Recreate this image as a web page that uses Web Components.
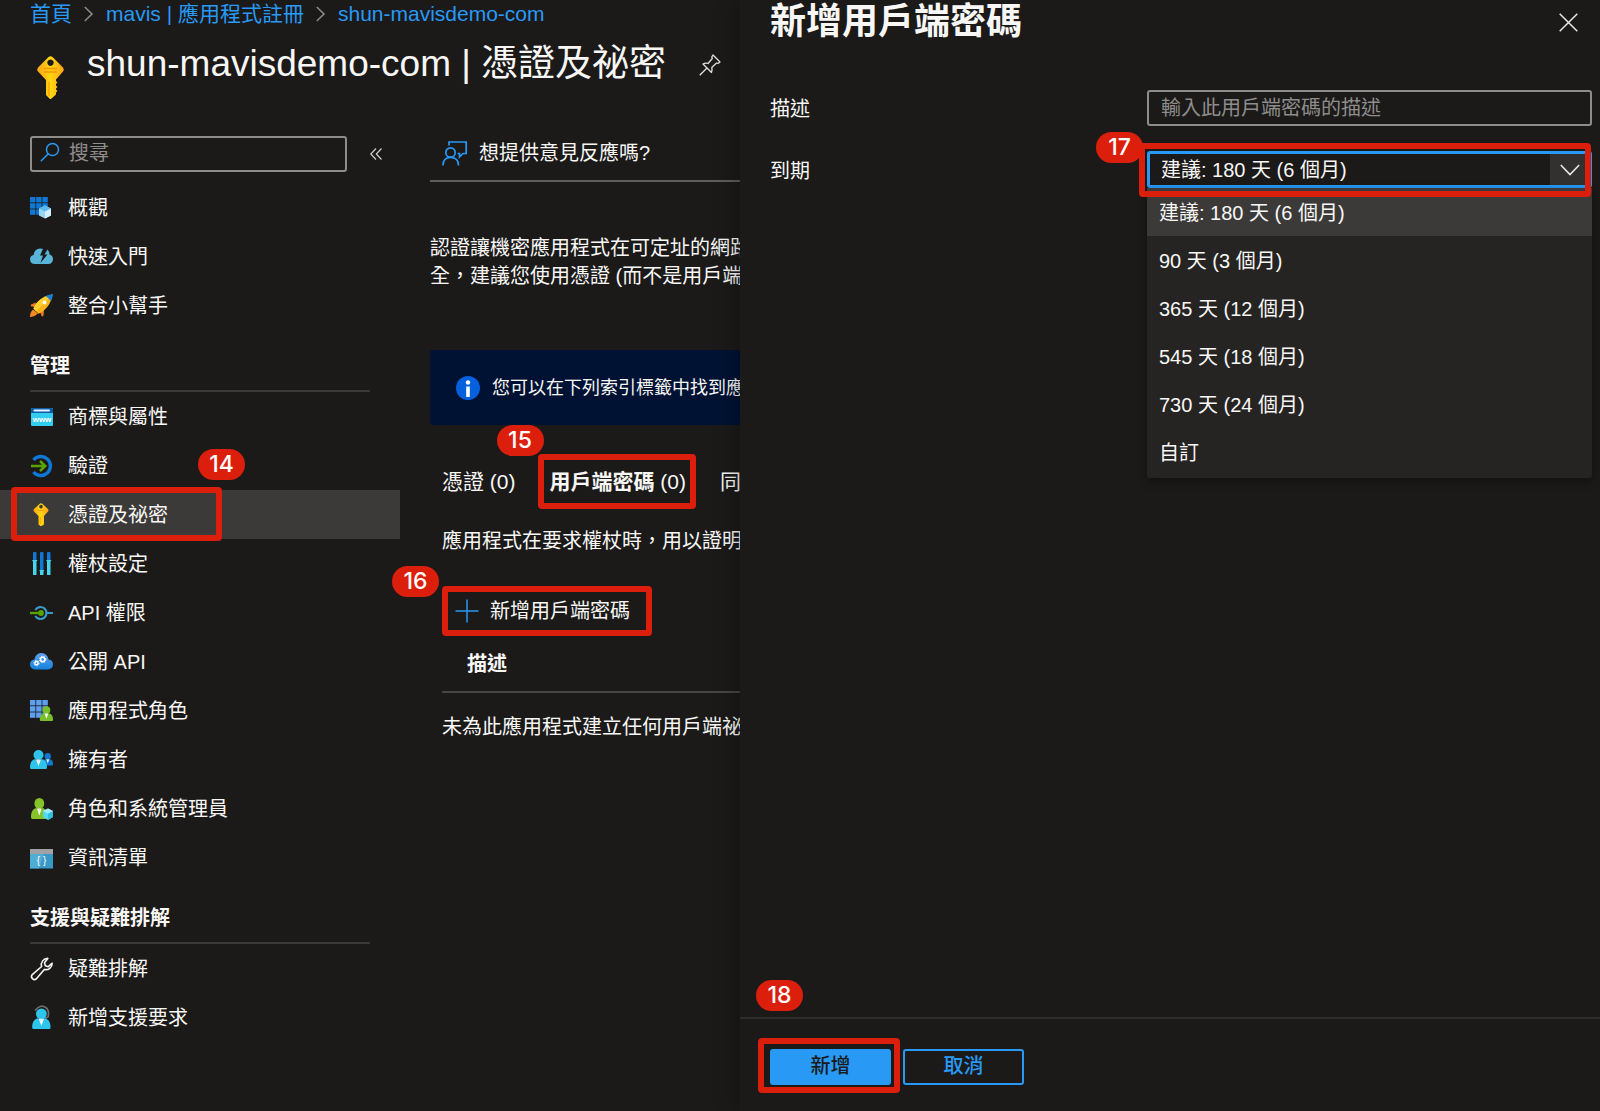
<!DOCTYPE html>
<html lang="zh-Hant">
<head>
<meta charset="utf-8">
<meta name="viewport" content="width=device-width, initial-scale=1">
<title>shun-mavisdemo-com | 憑證及祕密</title>
<style>
  :root {
    --bg: #1b1a19;
    --text: #f8f7f6;
    --muted: #8f8d8b;
    --line: #3b3a39;
    --selected: #3b3a39;
    --accent: #2899f5;
    --mark: #dc1e0c;
  }
  html, body { margin: 0; background: var(--bg); }
  body {
    color: var(--text);
    font: 20px/28px "Liberation Sans", "Noto Sans CJK TC", sans-serif;
  }
</style>
</head>
<body>
<portal-app></portal-app>

<script>
const person = (fill) =>
  `<circle cx="8.500" cy="5" r="5" fill="${fill}"/><path d="M0 17.500C0 12.500 2 9.500 5.500 9L8.500 12L11.500 9C15 9.500 17 12.500 17 17.500Q17 19 15.500 19H1.500Q0 19 0 17.500Z" fill="${fill}"/><path d="M6 9.500H11L8.500 16Z" fill="#fff" opacity=".9"/>`;

const grid = (fill) => {
  let out = '';
  for (let r = 0; r < 3; r++)
    for (let c = 0; c < 3; c++)
      out += `<rect x="${c * 6.2}" y="${1 + r * 6.2}" width="5.4" height="5.4" fill="${fill}"/>`;
  return out;
};

const gear = (x, y, r) =>
  `<circle cx="${x}" cy="${y}" r="${r}" fill="none" stroke="#fff" stroke-width="1.500"/><circle cx="${x}" cy="${y}" r="${r + 1}" fill="none" stroke="#fff" stroke-width="1" stroke-dasharray="1.300 1.300"/>`;

const ICONS = {
  key: [27, 43, `<defs><linearGradient id="g" x1="0" x2="1"><stop offset="0" stop-color="#fea11b"/><stop offset=".5" stop-color="#ffd70f"/><stop offset="1" stop-color="#fea11b"/></linearGradient></defs>
    <path fill="url(#g)" fill-rule="evenodd" d="M11.500 1Q13.500-.500 15.500 1L26 11.500Q27.500 13.500 26 15.500L19 23.500V25L20.500 26.500L19 28V29.500L20.500 31L19 32.500V33.500L20.500 35L19 36.500V38.500L14.500 42.500Q13.500 43.500 12.500 42.500L9 39V24L1 15.500Q-.500 13.500 1 11.500ZM13.500 3.500A3.200 3.200 0 1 0 13.510 3.500Z"/>
    <path d="M7 12.500H20M7 16H20" stroke="#ff9300" stroke-width="1.300"/><path d="M12 26V40" stroke="#ff9300" stroke-width="1"/>`],
  keySmall: [23, 23, `<defs><linearGradient id="g" x1="0" x2="1"><stop offset="0" stop-color="#fea11b"/><stop offset=".5" stop-color="#ffd70f"/><stop offset="1" stop-color="#fea11b"/></linearGradient></defs>
    <path fill="url(#g)" fill-rule="evenodd" d="M9.500 1Q11 -.500 12.500 1L18 6Q19 7.500 18 8.500L14 13V21.500L11.500 23H10.500L8.500 21.500V13L4 8.500Q3 7.500 4 6ZM11 1.800A1.800 1.800 0 1 0 11.010 1.800Z"/><path d="M7.500 7.500H14.500M10.300 14V21" stroke="#ff9300" stroke-width=".800"/>`],
  overview: [23, 23, grid('#0f78d4') + `<path d="M15 9.500L21 12.500V19.500L15 22.500L9 19.500V12.500Z" fill="#9ad4f3"/><path d="M9 12.500L15 9.500L21 12.500L15 15.500Z" fill="#5ab8ea"/><path d="M15 15.500L21 12.500V19.500L15 22.500Z" fill="#d2f0fc"/>`],
  quickstart: [23, 23, `<path d="M5 19A5 5 0 0 1 0 14.500A4.600 4.600 0 0 1 3.600 10A6.500 6.500 0 0 1 10.500 3.500A7 7 0 0 1 13 4L10 10.500H13L10.500 18L17.500 9.500H14.500L17.500 4.500A7 7 0 0 1 19.500 9.500A4.800 4.800 0 0 1 23 14A4.800 4.800 0 0 1 18.500 19Z" fill="#59b4d9"/>`],
  rocket: [23, 23, `<path d="M6 8.500L1 10.500Q-.200 12.500 3 12.500L5 13.500ZM14 16.500L13.500 21.500Q11.500 24 11 20L9.500 17.500Z" fill="#f27a22"/><path d="M3 15.500Q0 18 0 22.500Q0 23 .800 23Q5 22.500 8 19.500Z" fill="#f58a1f"/><path d="M3.500 14.500C6 8 12 2.500 22.500 .500C21 10.500 15 17 8.500 19.800Z" fill="#ffb515"/><path d="M3.500 14.500C6 8 12 2.500 22.500 .500L6 17.500Z" fill="#ffd02e"/><path d="M23 0C20.500 .300 18 1 15.800 2L21 7C22 5 22.600 2.500 23 0Z" fill="#1a7fd8"/><circle cx="14.500" cy="8.500" r="2" fill="#fff"/>`],
  brand: [23, 23, `<rect x="1" y="3" width="22" height="18" rx="1" fill="#32cdf0"/><path d="M1 4Q1 3 2 3H22Q23 3 23 4V8H1Z" fill="#0b5cab"/><rect x="3.500" y="4.500" width="16.500" height="2" rx="1" fill="#e6f2fb"/><text x="12" y="16.500" font-family="Liberation Sans" font-weight="700" font-size="8" text-anchor="middle" fill="#fff">www</text>`],
  auth: [23, 23, `<path d="M3.500 6A9.500 9.500 0 1 1 3.500 18" fill="none" stroke="#0f78d4" stroke-width="3.400"/><path d="M1 12H15M10 7L15.200 12L10 17" fill="none" stroke="#57a300" stroke-width="2.600"/>`],
  token: [23, 23, `<g fill="#0f78d4"><rect x="3" width="3.500" height="9" rx="1"/><rect x="10" width="3.500" height="19" rx="1"/><rect x="17" width="3.500" height="9" rx="1"/></g><g fill="#45d3f0"><path d="M2 8H7.500L6.500 9.500V23H3V9.500ZM9.200 18H14.300L13.500 19.500V23H10V19.500ZM16 8H21.500L20.500 9.500V23H17V9.500Z"/></g>`],
  apiPerm: [23, 23, `<path d="M5.300 9A6 6 0 1 1 5.300 15M17 12H23" fill="none" stroke="#3999c6" stroke-width="2.200"/><path d="M0 12H11" stroke="#57a300" stroke-width="2.400"/><circle cx="11" cy="12" r="2.900" fill="#57a300"/>`],
  exposeApi: [23, 23, `<defs><linearGradient id="g" y2="1" x2="0"><stop offset="0" stop-color="#5ea0ef"/><stop offset="1" stop-color="#1482dc"/></linearGradient></defs><path d="M5 19.500A5 5 0 0 1 0 14.500A5 5 0 0 1 4.500 9.500A7 7 0 0 1 11 3A7 7 0 0 1 18.500 9.500A5 5 0 0 1 23 14.500A5 5 0 0 1 18 19.500Z" fill="url(#g)"/>${gear(6.5, 13.2, 1.6)}${gear(12.7, 9.4, 2.2)}`],
  appRoles: [23, 23, grid('#5e9ff0') + `<g transform="translate(9.800 7.200) scale(.78)">${person('#78c02a')}</g>`],
  owners: [23, 23, `<g transform="translate(12.500 5) scale(.62 .66)">${person('#0f78d4')}</g><g transform="translate(0 2)">${person('#2fc3ea')}</g>`],
  admins: [23, 23, `<g transform="translate(1 1) scale(.98 1.1)">${person('#86c229')}</g><path d="M18 11.500L23 14V20L18 23L13 20V14Z" fill="#50d9f2"/><path d="M13 14L18 11.500L23 14L18 16.800Z" fill="#9cebff"/><path d="M18 16.800L23 14V20L18 23Z" fill="#32bedd"/>`],
  manifest: [23, 23, `<rect y="3" width="23" height="19.500" fill="#3999c6"/><path d="M0 8H14L9 22.500H0Z" fill="#59b4d9" opacity=".7"/><rect y="3" width="23" height="5" fill="#a0a1a2"/><text x="11.500" y="18" font-family="Liberation Sans" font-size="10" text-anchor="middle" fill="#fff">{ }</text>`],
  wrench: [23, 23, `<path d="M17.500 1.200A6.300 6.300 0 0 0 11.300 9.300L1.700 17.700A3 3 0 0 0 5.900 21.800L14 12.200A6.300 6.300 0 0 0 21.900 6L18 9.500L15 8.500L14.200 5.500Z" transform="translate(.3 .2)" fill="none" stroke="#f3f2f1" stroke-width="1.600" stroke-linejoin="round"/>`],
  support: [23, 23, `<path d="M5 4.500Q11-3 17 2.500Q19.500 6 18 11L14.500 12.500" fill="none" stroke="#6f6f6f" stroke-width="1.700"/><g transform="translate(2.200 2.500) scale(1.08)">${person('#2ec5ec')}</g>`],
  search: [20, 20, `<circle cx="12.500" cy="7.500" r="6" fill="none" stroke="#2899f5" stroke-width="1.500"/><path d="M8 12L.800 19.200" stroke="#2899f5" stroke-width="1.500"/>`],
  collapse: [12, 12, `<path d="M6 .500L.800 6L6 11.500M11.500 .500L6.300 6L11.500 11.500" fill="none" stroke="#d0cecc" stroke-width="1.200"/>`],
  chevron: [9, 16, `<path d="M.800 1L8 8L.800 15" fill="none" stroke="#8f8d8b" stroke-width="1.500"/>`],
  pin: [22, 22, `<path d="M14 1L21 8L19 9.500L17.500 9L12.800 13.500Q13.500 16.500 12.500 18.500L4 10Q6.500 8.500 9 9.500L13.300 4.500L12.800 3ZM8 14L.700 21.300" fill="none" stroke="#e3e1df" stroke-width="1.300" stroke-linejoin="round"/>`],
  feedback: [25, 25, `<g fill="none" stroke="#2899f5" stroke-width="1.700"><path d="M7 4.500V1H24.200V12.500H21L17.500 16V12.500H15.500"/><circle cx="8.500" cy="11.500" r="4.700"/><path d="M1 24.500Q1 16.500 8.500 16.500Q16.500 16.500 16.500 24.500"/></g>`],
  info: [24, 24, `<circle cx="12" cy="12" r="12" fill="#0560dd"/><circle cx="12" cy="6.500" r="2.200" fill="#fff"/><rect x="10.200" y="10.500" width="3.600" height="10.500" fill="#fff"/>`],
  plus: [24, 24, `<path d="M12 .500V23.500M.500 12H23.500" stroke="#2899f5" stroke-width="1.500"/>`],
  close: [19, 19, `<path d="M.700 .700L18.300 18.300M18.300 .700L.700 18.300" stroke="#e8e6e4" stroke-width="1.500"/>`],
  down: [20, 12, `<path d="M.800 1L10 10.500L19.200 1" fill="none" stroke="#e8e6e4" stroke-width="1.600"/>`]
};

/* Registers an element whose shadow root is filled from a render function. */
function define(name, render) {
  customElements.define(name, class extends HTMLElement {
    constructor() { super(); this.attachShadow({ mode: 'open' }); }
    connectedCallback() {
      if (this.shadowRoot.firstChild) return;
      const t = document.createElement('template');
      t.innerHTML = render(this);
      this.shadowRoot.append(t.content.cloneNode(true));
    }
  });
}

define('az-icon', (el) => {
  const [w, h, body] = ICONS[el.getAttribute('name')];
  return `<style>:host{display:block;flex:none}svg{display:block;overflow:visible}</style>
  <svg width="${w}" height="${h}" viewBox="0 0 ${w} ${h}" aria-hidden="true">${body}</svg>`;
});

/* Red frame with a numbered badge, laid over the element that contains it. */
define('step-mark', (el) => `
<style>
  :host { position: absolute; box-sizing: border-box; border: 6px solid var(--mark); border-radius: 4px; pointer-events: none; z-index: 5; }
  span {
    position: absolute; left: var(--bx); top: var(--by); width: 47px; height: 31px;
    border-radius: 16px; background: var(--mark); color: #fff;
    font: 500 23px/31px Inter, "Liberation Sans", sans-serif; text-align: center;
  }
</style><span>${el.getAttribute('n')}</span>`);

define('crumb-trail', () => `
<style>
  :host { display: block; }
  nav { display: flex; align-items: center; height: 28px; font-size: 21px; white-space: nowrap; }
  a { color: var(--accent); text-decoration: none; }
  az-icon { margin: 0 13px 0 12px; }
</style>
<nav aria-label="階層連結"><a href="#">首頁</a><az-icon name="chevron"></az-icon><a href="#">mavis | 應用程式註冊</a><az-icon name="chevron"></az-icon><a href="#">shun-mavisdemo-com</a></nav>`);

define('blade-header', () => `
<style>
  :host { display: flex; align-items: flex-start; padding: 14px 0 37px 7px; white-space: nowrap; }
  .key { margin-top: 14px; }
  h1 { margin: 0 0 0 23px; font-size: 37px; line-height: 44px; font-weight: 400; }
  button { margin: 12px 0 0 33px; padding: 0; border: 0; background: none; }
</style>
<az-icon class="key" name="key"></az-icon>
<h1><slot></slot></h1>
<button aria-label="釘選"><az-icon name="pin"></az-icon></button>`);

define('nav-item', (el) => `
<style>
  :host { display: block; position: relative; }
  :host([selected]) a { background: var(--selected); }
  a { display: flex; align-items: center; gap: 15px; height: 49px; padding-left: 30px; color: inherit; text-decoration: none; white-space: nowrap; }
</style>
<a href="#"><az-icon name="${el.getAttribute('icon')}"></az-icon><slot></slot></a><slot name="mark"></slot>`);

define('nav-section', (el) => `
<style>
  :host { display: block; }
  h2 { margin: 0 30px; padding: 22px 0 10px; border-bottom: 2px solid var(--line); font-size: 20px; line-height: 28px; font-weight: 700; }
</style>
<h2>${el.getAttribute('heading')}</h2><slot></slot>`);

define('side-nav', () => `
<style>
  :host { display: block; flex: none; width: 400px; }
  .find { display: flex; align-items: center; gap: 23px; padding: 0 18px 11px 30px; }
  label { flex: 1; box-sizing: border-box; display: flex; align-items: center; gap: 9px; height: 36px; padding: 0 8px; border: 2px solid var(--muted); border-radius: 3px; }
  input { flex: 1; min-width: 0; height: 28px; margin-bottom: 2px; padding: 0; border: 0; outline: 0; background: none; color: inherit; font: inherit; }
  input::placeholder { color: var(--muted); opacity: 1; }
  label az-icon { margin-bottom: 4px; }
  button { padding: 0; border: 0; background: none; }
</style>
<div class="find">
  <label><az-icon name="search"></az-icon><input type="text" placeholder="搜尋" aria-label="搜尋"></label>
  <button aria-label="摺疊"><az-icon name="collapse"></az-icon></button>
</div>
<nav>
  <nav-item icon="overview">概觀</nav-item>
  <nav-item icon="quickstart">快速入門</nav-item>
  <nav-item icon="rocket">整合小幫手</nav-item>
  <nav-section heading="管理">
    <nav-item icon="brand">商標與屬性</nav-item>
    <nav-item icon="auth">驗證</nav-item>
    <nav-item icon="keySmall" selected>憑證及祕密<step-mark slot="mark" n="14" style="left:11px;top:-3px;width:211px;height:54px;--bx:181px;--by:-44px"></step-mark></nav-item>
    <nav-item icon="token">權杖設定</nav-item>
    <nav-item icon="apiPerm">API 權限</nav-item>
    <nav-item icon="exposeApi">公開 API</nav-item>
    <nav-item icon="appRoles">應用程式角色</nav-item>
    <nav-item icon="owners">擁有者</nav-item>
    <nav-item icon="admins">角色和系統管理員</nav-item>
    <nav-item icon="manifest">資訊清單</nav-item>
  </nav-section>
  <nav-section heading="支援與疑難排解">
    <nav-item icon="wrench">疑難排解</nav-item>
    <nav-item icon="support">新增支援要求</nav-item>
  </nav-section>
</nav>`);

define('info-banner', () => `
<style>
  :host { display: flex; align-items: center; gap: 12px; height: 75px; padding-left: 26px; border-radius: 3px; background: #001233; font-size: 18px; white-space: nowrap; }
</style>
<az-icon name="info"></az-icon><slot></slot>`);

define('secrets-view', () => `
<style>
  :host { display: block; flex: 1; min-width: 0; padding-left: 30px; white-space: nowrap; }
  button { padding: 0; border: 0; background: none; color: inherit; font: inherit; white-space: nowrap; }
  .bar { padding: 0 0 10px 12px; border-bottom: 2px solid #5f5d5b; }
  .bar button { display: flex; align-items: center; gap: 12px; height: 34px; }
  p { margin: 0; }
  .intro { margin: 52px 0 60px; }
  .inner { padding-left: 12px; }
  .tabs { display: flex; gap: 34px; margin-top: 42px; font-size: 21px; line-height: 30px; }
  .tabs > div { position: relative; }
  .hint { margin-top: 30px; }
  .cmd { position: relative; display: flex; margin: 42px 0 25px; }
  .cmd button { display: flex; align-items: center; gap: 11px; height: 28px; padding-left: 13px; }
  table { width: 100%; border-collapse: collapse; }
  th { padding: 0 0 13px 25px; border-bottom: 2px solid #484644; text-align: left; font-weight: 700; }
  td { padding: 20px 0 0; }
</style>
<div class="bar"><button><az-icon name="feedback"></az-icon>想提供意見反應嗎?</button></div>
<p class="intro">認證讓機密應用程式在可定址的網路<br>全，建議您使用憑證 (而不是用戶端密</p>
<info-banner>您可以在下列索引標籤中找到應</info-banner>
<div class="inner">
  <div class="tabs" role="tablist">
    <div><button role="tab">憑證 (0)</button></div>
    <div><button role="tab" aria-selected="true"><b>用戶端密碼</b> (0)</button><step-mark n="15" style="left:-12px;top:-13px;width:158px;height:55px;--bx:-47px;--by:-35px"></step-mark></div>
    <div><button role="tab">同</button></div>
  </div>
  <p class="hint">應用程式在要求權杖時，用以證明其</p>
  <div class="cmd"><button><az-icon name="plus"></az-icon>新增用戶端密碼</button><step-mark n="16" style="left:0;top:-11px;width:210px;height:50px;--bx:-56px;--by:-26px"></step-mark></div>
  <table>
    <thead><tr><th scope="col">描述</th></tr></thead>
    <tbody><tr><td>未為此應用程式建立任何用戶端祕密</td></tr></tbody>
  </table>
</div>`);

define('text-field', (el) => `
<style>
  :host { display: grid; grid-template-columns: 377px minmax(0, 1fr); align-items: center; }
  label { padding-top: 2px; }
  input { box-sizing: border-box; width: 100%; height: 36px; padding: 0 12px; border: 2px solid var(--muted); border-radius: 3px; outline: 0; background: none; color: inherit; font: inherit; }
  input::placeholder { color: var(--muted); opacity: 1; }
</style>
<label for="f">${el.getAttribute('label')}</label>
<input id="f" type="text" placeholder="${el.getAttribute('placeholder')}">`);

define('drop-field', (el) => {
  const items = el.getAttribute('options').split('|');
  return `
<style>
  :host { display: grid; grid-template-columns: 377px minmax(0, 1fr); align-items: center; }
  label { padding-top: 2px; }
  .box { position: relative; display: grid; }
  .box > select, .box > .arrow { grid-area: 1 / 1; }
  select { appearance: none; box-sizing: border-box; width: 100%; height: 37px; margin: 0; padding: 0 12px 0 11px; border: 3px solid var(--accent); border-radius: 3px; outline: 0; background: var(--bg); color: inherit; font: inherit; }
  .arrow { justify-self: end; display: grid; place-items: center; width: 39px; margin: 3px; background: #323130; pointer-events: none; }
  ul { position: absolute; top: 100%; left: 0; right: 0; margin: 0; padding: 0 0 2px; list-style: none; background: #252423; border-radius: 0 0 3px 3px; box-shadow: 0 3px 10px rgba(0,0,0,.4); z-index: 2; }
  li { padding: 11px 12px 9px; }
  li[aria-selected] { background: var(--selected); }
</style>
<label for="f">${el.getAttribute('label')}</label>
<div class="box">
  <select id="f">${items.map((t) => `<option>${t}</option>`).join('')}</select>
  <div class="arrow"><az-icon name="down"></az-icon></div>
  <ul role="listbox">${items.map((t, i) => `<li role="option"${i ? '' : ' aria-selected="true"'}>${t}</li>`).join('')}</ul>
  <slot></slot>
</div>`;
});

define('push-button', () => `
<style>
  :host { display: block; position: relative; }
  button { box-sizing: border-box; width: 121px; height: 36px; padding: 0 0 3px; border: 2px solid var(--accent); border-radius: 3px; background: none; color: var(--accent); font: inherit; font-weight: 500; }
  :host([primary]) button { background: var(--accent); color: var(--bg); }
</style>
<button><slot></slot></button><slot name="mark"></slot>`);

define('side-panel', (el) => `
<style>
  :host { display: flex; flex-direction: column; box-sizing: border-box; flex: none; width: 53.75%; min-height: 100vh; background: var(--bg); box-shadow: 0 0 22px rgba(0,0,0,.4); z-index: 3; }
  header { display: flex; justify-content: space-between; align-items: flex-start; padding: 0 22px 47px 30px; }
  h2 { margin: 0; font-size: 36px; line-height: 43px; font-weight: 700; }
  header button { margin-top: 13px; padding: 0; border: 0; background: none; }
  .body { flex: 1; display: flex; flex-direction: column; gap: 25px; padding: 0 8px 0 30px; }
  footer { display: flex; gap: 12px; padding: 30px 30px 26px; border-top: 2px solid #2d2c2b; }
</style>
<header><h2>${el.getAttribute('heading')}</h2><button aria-label="關閉"><az-icon name="close"></az-icon></button></header>
<div class="body"><slot></slot></div>
<footer><slot name="actions"></slot></footer>`);

define('portal-app', () => `
<style>
  :host { display: flex; min-height: 100vh; }
  main { flex: 1; min-width: 0; overflow: hidden; }
  crumb-trail, blade-header { margin-left: 30px; }
  .cols { display: flex; }
</style>
<main>
  <crumb-trail></crumb-trail>
  <blade-header>shun-mavisdemo-com | 憑證及祕密</blade-header>
  <div class="cols"><side-nav></side-nav><secrets-view></secrets-view></div>
</main>
<side-panel heading="新增用戶端密碼">
  <text-field label="描述" placeholder="輸入此用戶端密碼的描述"></text-field>
  <drop-field label="到期" options="建議: 180 天 (6 個月)|90 天 (3 個月)|365 天 (12 個月)|545 天 (18 個月)|730 天 (24 個月)|自訂">
    <step-mark n="17" style="left:-8px;right:1px;top:-8px;height:54px;--bx:-49px;--by:-17px"></step-mark>
  </drop-field>
  <push-button slot="actions" primary>新增<step-mark slot="mark" n="18" style="left:-12px;top:-11px;width:142px;height:55px;--bx:-8px;--by:-64px"></step-mark></push-button>
  <push-button slot="actions">取消</push-button>
</side-panel>`);
</script>
</body>
</html>
